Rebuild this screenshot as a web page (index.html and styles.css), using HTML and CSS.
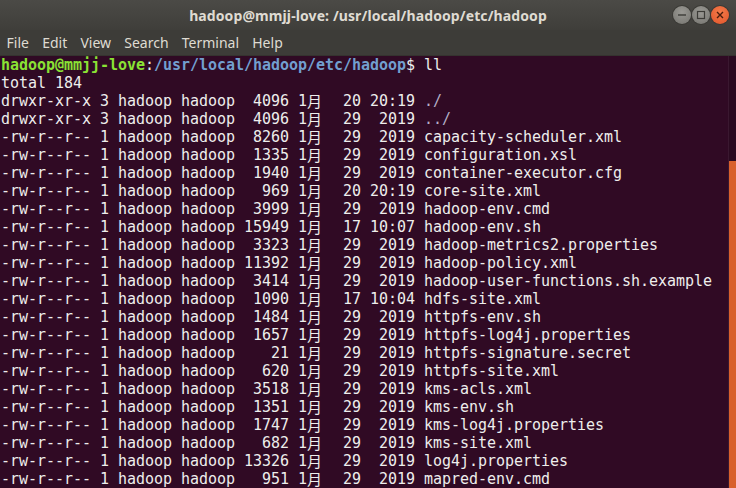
FILE: index.html
```html
<!DOCTYPE html>
<html lang="en">
<head>
  <meta charset="UTF-8" />
  <title>Terminal</title>
  <link rel="stylesheet" href="styles.css">
</head>
<body>
  <div class="window">

    <div class="titlebar">
      <span class="title">hadoop@mmjj-love: /usr/local/hadoop/etc/hadoop</span>
      <div class="controls">
        <span class="ctl"><svg width="18" height="18" viewBox="0 0 18 18"><line x1="5" y1="9" x2="13" y2="9" stroke="#3c3b37" stroke-width="1.4"/></svg></span>
        <span class="ctl"><svg width="18" height="18" viewBox="0 0 18 18"><rect x="5.5" y="5.5" width="7" height="7" fill="none" stroke="#3c3b37" stroke-width="1.2"/></svg></span>
        <span class="ctl close"><svg width="18" height="18" viewBox="0 0 18 18"><path d="M6 6 L12 12 M12 6 L6 12" stroke="#4a1c0c" stroke-width="1.4"/></svg></span>
      </div>
    </div>

    <div class="menubar">
      <span>File</span>
      <span>Edit</span>
      <span>View</span>
      <span>Search</span>
      <span>Terminal</span>
      <span>Help</span>
    </div>

    <div class="term">
<pre class="screen"><span class="user">hadoop@mmjj-love</span>:<span class="path">/usr/local/hadoop/etc/hadoop</span>$ ll
total 184
drwxr-xr-x 3 hadoop hadoop  4096 1<span class="w">月</span>  20 20:19 <span class="dir">./</span>
drwxr-xr-x 3 hadoop hadoop  4096 1<span class="w">月</span>  29  2019 <span class="dir">../</span>
-rw-r--r-- 1 hadoop hadoop  8260 1<span class="w">月</span>  29  2019 capacity-scheduler.xml
-rw-r--r-- 1 hadoop hadoop  1335 1<span class="w">月</span>  29  2019 configuration.xsl
-rw-r--r-- 1 hadoop hadoop  1940 1<span class="w">月</span>  29  2019 container-executor.cfg
-rw-r--r-- 1 hadoop hadoop   969 1<span class="w">月</span>  20 20:19 core-site.xml
-rw-r--r-- 1 hadoop hadoop  3999 1<span class="w">月</span>  29  2019 hadoop-env.cmd
-rw-r--r-- 1 hadoop hadoop 15949 1<span class="w">月</span>  17 10:07 hadoop-env.sh
-rw-r--r-- 1 hadoop hadoop  3323 1<span class="w">月</span>  29  2019 hadoop-metrics2.properties
-rw-r--r-- 1 hadoop hadoop 11392 1<span class="w">月</span>  29  2019 hadoop-policy.xml
-rw-r--r-- 1 hadoop hadoop  3414 1<span class="w">月</span>  29  2019 hadoop-user-functions.sh.example
-rw-r--r-- 1 hadoop hadoop  1090 1<span class="w">月</span>  17 10:04 hdfs-site.xml
-rw-r--r-- 1 hadoop hadoop  1484 1<span class="w">月</span>  29  2019 httpfs-env.sh
-rw-r--r-- 1 hadoop hadoop  1657 1<span class="w">月</span>  29  2019 httpfs-log4j.properties
-rw-r--r-- 1 hadoop hadoop    21 1<span class="w">月</span>  29  2019 httpfs-signature.secret
-rw-r--r-- 1 hadoop hadoop   620 1<span class="w">月</span>  29  2019 httpfs-site.xml
-rw-r--r-- 1 hadoop hadoop  3518 1<span class="w">月</span>  29  2019 kms-acls.xml
-rw-r--r-- 1 hadoop hadoop  1351 1<span class="w">月</span>  29  2019 kms-env.sh
-rw-r--r-- 1 hadoop hadoop  1747 1<span class="w">月</span>  29  2019 kms-log4j.properties
-rw-r--r-- 1 hadoop hadoop   682 1<span class="w">月</span>  29  2019 kms-site.xml
-rw-r--r-- 1 hadoop hadoop 13326 1<span class="w">月</span>  29  2019 log4j.properties
-rw-r--r-- 1 hadoop hadoop   951 1<span class="w">月</span>  29  2019 mapred-env.cmd</pre>
      <div class="scrollbar">
        <div class="thumb"></div>
      </div>
    </div>

  </div>
</body>
</html>
```

FILE: styles.css
```css
html, body {
  margin: 0;
  padding: 0;
  background-color: #300a24;
}

.window {
  width: 736px;
  height: 488px;
  display: flex;
  flex-direction: column;
  overflow: hidden;
}

.titlebar {
  height: 30px;
  flex: none;
  display: flex;
  align-items: center;
  justify-content: center;
  position: relative;
  background: linear-gradient(#4b4a46, #3f3e3a);
}

.title {
  font-family: 'Noto Sans', 'Open Sans', sans-serif;
  font-size: 14px;
  font-weight: 700;
  color: #dfdbd2;
  letter-spacing: 0.1px;
}

.controls {
  position: absolute;
  right: 7px;
  top: 6px;
  display: flex;
  gap: 1px;
}

.ctl {
  width: 18px;
  height: 18px;
  border-radius: 50%;
  background: radial-gradient(circle at 50% 35%, #9a9994, #75746f);
  box-shadow: 0 0 0 1px #3a3935;
  display: block;
}

.ctl svg {
  display: block;
}

.close {
  background: radial-gradient(circle at 50% 35%, #f47b4a, #e0542a);
}

.menubar {
  height: 25px;
  flex: none;
  display: flex;
  align-items: center;
  padding-left: 0;
  background-color: #3d3c38;
  border-bottom: 1px solid #35332f;
  font-family: 'Noto Sans', 'Open Sans', sans-serif;
  font-size: 14px;
  color: #dfdbd2;
}

.menubar span {
  padding: 0 6.6px;
  line-height: 22px;
}

.term {
  flex: 1;
  display: flex;
  min-height: 0;
}

.screen {
  flex: 1;
  margin: 0;
  padding: 0 0 0 1px;
  font-family: 'DejaVu Sans Mono', monospace;
  font-size: 15px;
  letter-spacing: -0.03px;
  line-height: 18px;
  color: #eeeeec;
  overflow: hidden;
}

.user {
  color: #8ae234;
  font-weight: 700;
}

.path {
  color: #729fcf;
  font-weight: 700;
}

.dir {
  color: #b3afc6;
}

.w {
  display: inline-block;
  width: 18px;
  font-family: 'Noto Sans CJK SC', sans-serif;
  font-size: 15px;
  line-height: 18px;
  vertical-align: top;
}

.scrollbar {
  width: 7px;
  flex: none;
  border-left: 1px solid #3a1830;
  background-color: #2a0a20;
}

.thumb {
  margin-top: 105px;
  height: 330px;
  background-color: #d8602c;
}
```
